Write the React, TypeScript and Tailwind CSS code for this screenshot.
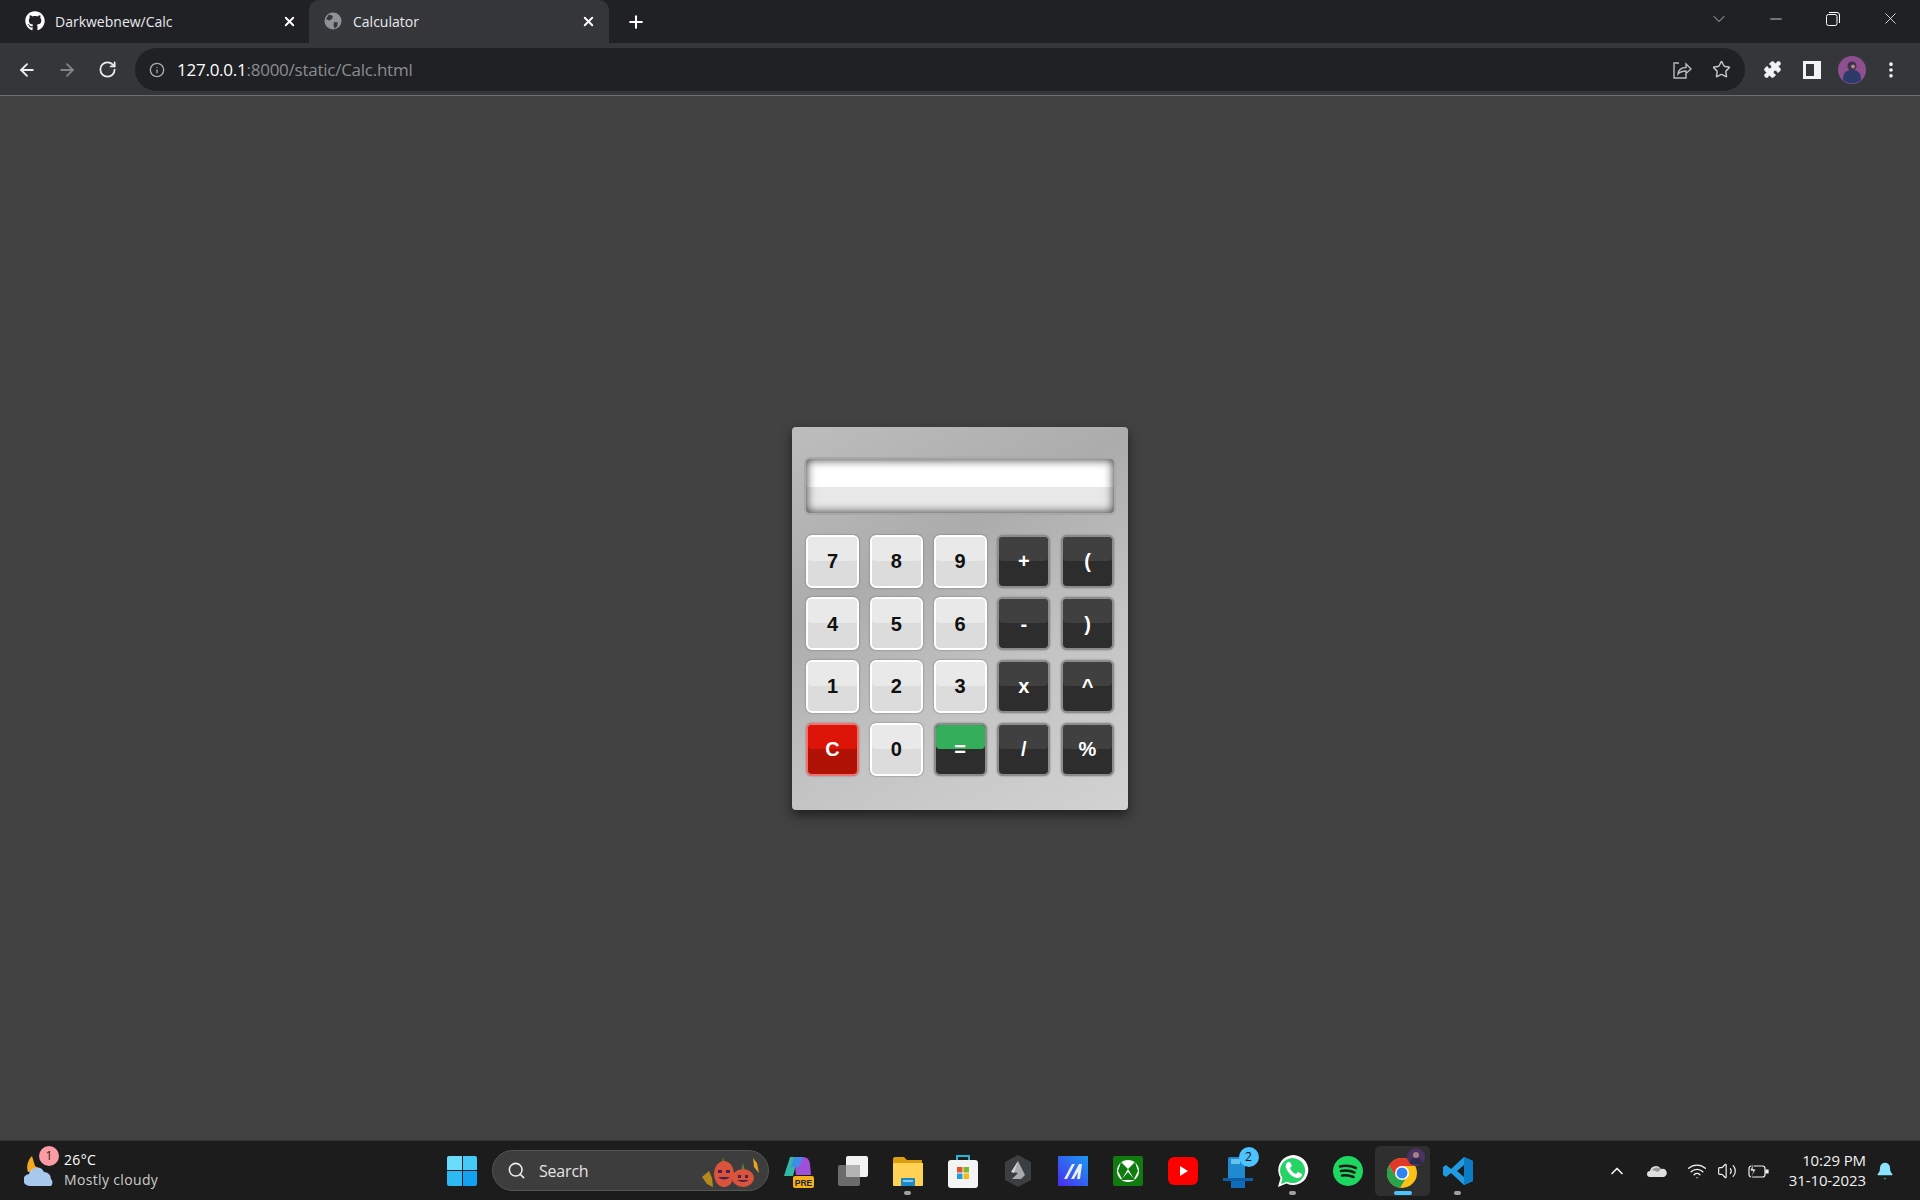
import { FaGithub } from "react-icons/fa";
import { ArrowLeft, ArrowRight, RotateCw, Info, Star, Puzzle, X, Plus, ChevronDown, Minus, EllipsisVertical, Search, ChevronUp, Wifi, Volume2, Bell } from "lucide-react";

const keys = [
  ["7", "light"], ["8", "light"], ["9", "light"], ["+", "dark"], ["(", "dark"],
  ["4", "light"], ["5", "light"], ["6", "light"], ["-", "dark"], [")", "dark"],
  ["1", "light"], ["2", "light"], ["3", "light"], ["x", "dark"], ["^", "dark"],
  ["C", "red"], ["0", "light"], ["=", "green"], ["/", "dark"], ["%", "dark"],
];

function Key({ label, kind }: { label: string; kind: string }) {
  const shell =
    kind === "light"
      ? "border-2 border-white bg-[#dcdcdc] text-[#111] shadow-[0_0_2px_#666666]"
      : kind === "red"
        ? "border-2 border-[#f27070] bg-[#b01206] text-white shadow-[0_0_2px_#777777]"
        : "border-2 border-[#8c8c8c] bg-[#2d2d2d] text-white shadow-[0_0_2px_#777777]";
  const top =
    kind === "light"
      ? "bg-[#e9e9e9]"
      : kind === "red"
        ? "bg-[#dd1508]"
        : kind === "green"
          ? "bg-[#34ae5a]"
          : "bg-[#404040]";
  return (
    <div className={`relative flex h-[53px] w-[53px] items-center justify-center overflow-hidden rounded-[6px] font-['Liberation_Sans',sans-serif] text-[20px] font-bold ${shell}`}>
      <div className={`absolute inset-x-0 top-0 h-[24px] rounded-b-[4px] ${top}`}></div>
      <span className="relative">{label}</span>
    </div>
  );
}

function Calculator() {
  return (
    <div className="flex h-[383px] w-[336px] flex-col rounded-[4px] bg-[linear-gradient(150deg,#bdbdbd_0%,#acacac_35%,#c4c4c4_65%,#d2d2d2_100%)] px-[14px] pt-[32px] shadow-[0_5px_12px_rgba(0,0,0,0.55)]">
      <div className="h-[54px] w-full rounded-[4px] bg-[linear-gradient(#ffffff_52%,#e8e8e8_52%)] shadow-[inset_0_0_10px_1px_#444,0_0_1px_2px_#a8a8a8]"></div>
      <div className="mt-[22px] grid grid-cols-[repeat(5,53px)] justify-between gap-y-[9.7px]">
        {keys.map(([label, kind]) => (
          <Key key={label} label={label} kind={kind} />
        ))}
      </div>
    </div>
  );
}

function Globe() {
  return (
    <svg width="18" height="18" viewBox="0 0 18 18">
      <circle cx="9" cy="9" r="8.5" fill="#8e9297" />
      <path d="M5 2.5 9 4l-1 3-3 1.5L2 7zM10 10l4 .5-1 4-2.5 2-1-3z" fill="#35363a" />
    </svg>
  );
}

function Tab({ active, icon, title }: { active?: boolean; icon: React.ReactNode; title: string }) {
  return (
    <div className={`flex h-[43px] items-center pb-[1px] ${active ? "w-[300px] rounded-t-[10px] bg-[#35363a] pl-[15px] pr-[13px]" : "w-[309px] pl-[25px] pr-[12px]"}`}>
      {icon}
      <span className={`font-['Open_Sans',sans-serif] text-[14px] tracking-[0px] text-[#e8eaed] ${active ? "ml-[11px]" : "ml-[10px]"}`}>{title}</span>
      <X className="ml-auto text-white" size={15} strokeWidth={3} />
    </div>
  );
}

function TabStrip() {
  return (
    <div className="flex h-[43px] items-center bg-[#202124] text-white">
      <Tab icon={<FaGithub size={20} className="text-white" />} title="Darkwebnew/Calc" />
      <Tab active icon={<Globe />} title="Calculator" />
      <Plus className="ml-[17px]" size={20} strokeWidth={2.5} />
      <div className="mb-[6px] ml-auto flex items-center">
        <ChevronDown size={20} strokeWidth={1} className="mr-[38px] text-[#d8d8d8]" />
        <Minus size={18} strokeWidth={1} className="mr-[41px]" />
        <svg width="14" height="14" viewBox="0 0 14 14" fill="none" stroke="white" className="mr-[41px]">
          <rect x="0.5" y="2.5" width="10.5" height="11" rx="2" />
          <path d="M3 .5h8a2.5 2.5 0 0 1 2.5 2.5v8" />
        </svg>
        <X size={19} strokeWidth={1} className="mr-[20px]" />
      </div>
    </div>
  );
}

function Toolbar() {
  return (
    <div className="flex h-[53px] items-start border-b border-[#6e6e6e] bg-[#35363a] pt-[5px] text-white">
      <div className="flex h-[43px] w-[135px] items-center pl-[17px]">
        <ArrowLeft size={20} strokeWidth={2.2} className="text-[#eeeeee]" />
        <ArrowRight size={20} strokeWidth={2.2} className="ml-[20px] text-[#808387]" />
        <RotateCw size={19} strokeWidth={2.2} className="ml-[21px] text-[#eeeeee]" />
      </div>
      <div className="flex h-[43px] w-[1610px] items-center rounded-full bg-[#202124] pl-[14px] pr-[14px]">
        <Info size={16} className="text-[#a8abaf]" />
        <span className="ml-[12px] font-['Open_Sans',sans-serif] text-[17px] tracking-[-0.25px] text-white">
          127.0.0.1<span className="text-[#8a8d91]">:8000/static/Calc.html</span>
        </span>
        <svg width="20" height="20" viewBox="0 0 20 20" fill="none" stroke="#b8babd" strokeWidth="1.4" className="ml-auto mr-[20px]">
          <path d="M7 3H2v15h12v-4" />
          <path d="M6 14c.5-4 3.5-6.500 8-6.500V4l5 5-5 4.500V11c-3.500 0-6 1-8 3z" />
        </svg>
        <Star size={19} strokeWidth={1.8} className="text-[#c4c6c9]" />
      </div>
      <div className="flex h-[43px] flex-1 items-center">
        <Puzzle size={19} fill="#f1f3f4" strokeWidth={1} className="ml-[18px] text-[#f1f3f4]" />
        <svg width="18" height="18" viewBox="0 0 18 18" className="ml-[21px]">
          <path d="M0 0h18v18H0zM3 3v12h8V3z" fill="#f1f3f4" fillRule="evenodd" />
        </svg>
        <svg width="28" height="28" viewBox="0 0 28 28" className="ml-[17px]">
          <circle cx="14" cy="14" r="14" fill="#8d4f8d" />
          <circle cx="14" cy="10" r="4.500" fill="#40324e" />
          <path d="M5 24c0-8 4-10 9-10s9 2 9 10a14 14 0 0 1-18 0z" fill="#2b3a68" />
          <circle cx="15" cy="10.500" r="2" fill="#b08a86" />
        </svg>
        <EllipsisVertical size={20} strokeWidth={2.4} className="ml-[15px] text-[#f1f3f4]" />
      </div>
    </div>
  );
}

function Weather() {
  return (
    <div className="flex w-[200px] items-center pl-[24px]">
      <div className="relative h-[36px] w-[33px]">
        <svg width="32" height="36" viewBox="0 0 32 36" className="absolute left-0 top-0">
          <path d="M8 3 11 13 18 17 4 19C2 13 4 7 8 3z" fill="#f4a91f" />
          <path d="M6 33a6 6 0 0 1-1-12 8 8 0 0 1 15-2 7 7 0 0 1 7 7 5 5 0 0 1 0 7z" fill="#a9c8ee" />
        </svg>
        <div className="absolute left-[15px] top-[-7px] flex h-[20px] w-[20px] items-center justify-center rounded-full bg-[#fb9ca4] font-['Open_Sans',sans-serif] text-[12px] text-[#222]">1</div>
      </div>
      <div className="mb-[2px] ml-[7px] font-['Open_Sans',sans-serif] text-[14px] leading-[20px] tracking-[0.35px]">
        <div className="text-white">26°C</div>
        <div className="text-[#cccccc]">Mostly cloudy</div>
      </div>
    </div>
  );
}

function Pumpkins() {
  return (
    <svg width="64" height="34" viewBox="0 0 64 34" className="ml-auto mr-[5px]">
      <path d="M3 23 10 17 13 24 14 33 8 30z" fill="#b58a1d" />
      <path d="M24 3l1.500 6h-3zM44 9l1.500 6h-3z" fill="#4e8a2c" />
      <ellipse cx="25" cy="20" rx="10" ry="13" fill="#d9543a" />
      <ellipse cx="44" cy="24" rx="11" ry="9" fill="#d9543a" />
      <path d="M19 16h4v3h-4zM27 16h4v3h-4zM19 23q6 5 12 0zM39 21h3v3h-3zM46 21h3v3h-3zM38 26q6 4 12 0z" fill="#4a1f52" />
      <path d="M54 4l4 5 2 10-5-6z" fill="#e8a21f" />
    </svg>
  );
}

function WinIcon() {
  return (
    <div className="grid h-[30px] w-[30px] grid-cols-2 gap-[1px]">
      <div className="rounded-tl-[2px] bg-[#6cdcfb]"></div>
      <div className="rounded-tr-[2px] bg-[#45c9f7]"></div>
      <div className="rounded-bl-[2px] bg-[#2eb8f4]"></div>
      <div className="rounded-br-[2px] bg-[#12a2ef]"></div>
    </div>
  );
}

function SearchBox() {
  return (
    <div className="ml-[15px] flex h-[41px] w-[277px] items-center rounded-full border border-[#555] bg-[#3d3d3d] pl-[14px]">
      <Search size={19} className="text-[#eeeeee]" />
      <span className="ml-[13px] font-['Open_Sans',sans-serif] text-[16px] tracking-[-0.2px] text-[#e4e4e4]">Search</span>
      <Pumpkins />
    </div>
  );
}

function Slot({ children, mark, active }: { children: React.ReactNode; mark?: boolean; active?: boolean }) {
  return (
    <div className={`relative flex h-[50px] w-[55px] items-center justify-center rounded-[5px] ${active ? "bg-[#2f2f2f]" : ""}`}>
      {children}
      {mark && (
        <div className={`absolute bottom-[1px] h-[4px] rounded-full ${active ? "w-[18px] bg-[#4cc2ff]" : "w-[7px] bg-[#a0a0a0]"}`}></div>
      )}
    </div>
  );
}

function AppIcons() {
  return (
    <div className="ml-[1px] flex items-center">
      <Slot>
        <svg width="32" height="34" viewBox="0 0 32 34">
          <path d="M8 3h8l-5 19H2z" fill="#34b8a6" />
          <path d="M12 3h9q6 0 7 7l1 11H14z" fill="#a04fd8" />
          <path d="M12 3h9l-4 10h-8z" fill="#3f8de8" />
          <rect x="11" y="22" width="21" height="12" rx="2" fill="#f6b21a" />
          <text x="21.500" y="31.500" textAnchor="middle" fontFamily="Liberation Sans" fontSize="8.500" fontWeight="700" fill="#222">PRE</text>
        </svg>
      </Slot>
      <Slot>
        <svg width="32" height="32" viewBox="0 0 32 32">
          <rect x="1" y="10" width="22" height="21" rx="2" fill="#6b6b6b" />
          <rect x="9" y="1" width="22" height="21" rx="2" fill="#f2f2f2" />
          <rect x="9" y="10" width="14" height="12" fill="#b4b4b4" />
        </svg>
      </Slot>
      <Slot mark>
        <svg width="32" height="32" viewBox="0 0 32 32">
          <path d="M1 4a2 2 0 0 1 2-2h9l3 3h15v6H1z" fill="#dc9d10" />
          <path d="M1 8h30v22a1 1 0 0 1-1 1H2a1 1 0 0 1-1-1z" fill="#fdd255" />
          <rect x="9" y="23" width="14" height="8" rx="1" fill="#1f86c9" />
          <rect x="11" y="25" width="10" height="2" fill="#7fcdf2" />
        </svg>
      </Slot>
      <Slot>
        <svg width="30" height="34" viewBox="0 0 30 34">
          <path d="M9 6V2h12v4" fill="none" stroke="#23b5d8" strokeWidth="2" />
          <rect x="0" y="6" width="30" height="28" rx="3" fill="#f4f4f4" />
          <rect x="9" y="13" width="5.500" height="5.500" fill="#e8512c" />
          <rect x="15.500" y="13" width="5.500" height="5.500" fill="#7ab92c" />
          <rect x="9" y="19.500" width="5.500" height="5.500" fill="#1e9ee0" />
          <rect x="15.500" y="19.500" width="5.500" height="5.500" fill="#f6b81a" />
        </svg>
      </Slot>
      <Slot>
        <svg width="28" height="32" viewBox="0 0 28 32">
          <path d="M14 0 27 7v18l-13 7-13-7V7z" fill="#3c3f42" />
          <path d="M14 6 21 20l-4 4H8l6-6-6-1z" fill="#a9acaf" />
          <path d="M14 6 7 17l3 1z" fill="#d4d6d8" />
        </svg>
      </Slot>
      <Slot>
        <svg width="30" height="30" viewBox="0 0 30 30">
          <defs>
            <linearGradient id="mvGrad" x1="0" y1="1" x2="1" y2="0">
              <stop offset="0" stopColor="#4a2cf0" />
              <stop offset="1" stopColor="#1a9bf2" />
            </linearGradient>
          </defs>
          <rect width="30" height="30" fill="url(#mvGrad)" />
          <path d="M6 23 14 8h3L9 23zM13 23 21 8h3l-2 15h-3l1-7-4 7z" fill="#e8edff" />
        </svg>
      </Slot>
      <Slot>
        <svg width="30" height="30" viewBox="0 0 30 30">
          <rect width="30" height="30" rx="2" fill="#107c10" />
          <circle cx="15" cy="15" r="11" fill="#fff" />
          <path d="M15 13 8 6l-3 9 4 8zM15 13l7-7 3 9-4 8zM15 16l-7 8h14z" fill="#107c10" />
        </svg>
      </Slot>
      <Slot>
        <svg width="30" height="30" viewBox="0 0 30 30">
          <rect y="1" width="30" height="28" rx="6" fill="#fe0000" />
          <path d="M12 10v10l8-5z" fill="#fff" />
        </svg>
      </Slot>
      <Slot>
        <div className="relative h-[34px] w-[30px]">
          <svg width="30" height="34" viewBox="0 0 30 34">
            <rect x="5" y="3" width="17" height="24" rx="2" fill="#1f8ad2" />
            <rect x="8" y="5" width="9" height="5" fill="#62c4ee" />
            <rect x="0" y="24" width="30" height="3" fill="#0c5ea8" />
            <rect x="8" y="27" width="14" height="7" fill="#0f6cbd" />
          </svg>
          <div className="absolute left-[16px] top-[-7px] flex h-[20px] w-[20px] items-center justify-center rounded-full bg-[#4cc2ff] font-['Open_Sans',sans-serif] text-[12px] text-[#111]">2</div>
        </div>
      </Slot>
      <Slot mark>
        <svg width="32" height="34" viewBox="0 0 32 34">
          <path d="M1 33 3.500 24A15 15 0 1 1 9.500 29.500z" fill="#fff" />
          <path d="M4 30 5.500 24A12.500 12.500 0 1 1 10 27.800z" fill="#25d366" />
          <path d="M11 8c-2 1-3 3-2 6 2 5 6 9 11 10 3 0 5-1 5-4l-4-2-2 2c-3-1-5-3-6-6l2-2-2-4z" fill="#fff" />
        </svg>
      </Slot>
      <Slot>
        <svg width="30" height="30" viewBox="0 0 30 30">
          <circle cx="15" cy="15" r="15" fill="#1ed760" />
          <path d="M7 10.500q8-2 16 1.500M8 15q7-1.500 13.500 1.500M9 19.500q6-1 11.500 1.500" fill="none" stroke="#1a1a1a" strokeWidth="2.500" strokeLinecap="round" />
        </svg>
      </Slot>
      <Slot mark active>
        <div className="relative h-[34px] w-[32px]">
          <svg width="32" height="32" viewBox="0 0 32 32" className="absolute bottom-0 left-0">
            <circle cx="15" cy="17" r="15" fill="#fbc116" />
            <path d="M15 2A15 15 0 0 0 2 9.500L9 21l6-11h13A15 15 0 0 0 15 2z" fill="#e0392b" />
            <path d="M2 9.500A15 15 0 0 0 13 32l6-10-10-1z" fill="#2ba24c" />
            <circle cx="15" cy="17" r="7" fill="#fff" />
            <circle cx="15" cy="17" r="5.500" fill="#2f84f2" />
          </svg>
          <svg width="18" height="18" viewBox="0 0 18 18" className="absolute right-[-6px] top-[-6px]">
            <circle cx="9" cy="9" r="9" fill="#4b3360" />
            <circle cx="9" cy="7" r="3" fill="#a48088" />
            <path d="M3 16c0-5 3-6 6-6s6 1 6 6z" fill="#2e2a4e" />
          </svg>
        </div>
      </Slot>
      <Slot mark>
        <svg width="30" height="30" viewBox="0 0 30 30">
          <path d="M21 1 30 5v20l-9 4L8 17l-5 4-3-2v-8l3-2 5 4z" fill="#1f9be3" />
          <path d="M21 1 30 5v20l-9 4z" fill="#0d7cc6" />
          <path d="M21 9v12l-7-6z" fill="#1a1a1a" />
        </svg>
      </Slot>
    </div>
  );
}

function Tray() {
  return (
    <div className="ml-auto flex items-center text-[#f2f2f2]">
      <ChevronUp size={20} strokeWidth={2} className="" />
      <svg width="20" height="13" viewBox="0 0 20 13" className="ml-[20px]">
        <path d="M3 13a3 3 0 0 1 0-6 6 6 0 0 1 11-2 4 4 0 0 1 3 8z" fill="#e0e0e0" />
        <path d="M5 6a6 6 0 0 1 9-1l-3 3z" fill="#9a9a9a" />
      </svg>
      <Wifi size={20} strokeWidth={1.6} className="ml-[20px]" />
      <Volume2 size={20} strokeWidth={1.4} className="ml-[10px]" />
      <svg width="22" height="18" viewBox="0 0 22 18" fill="none" stroke="#f2f2f2" strokeWidth="1.2" className="ml-[10px]">
        <rect x="2" y="4" width="16" height="11" rx="2.500" />
        <path d="M19 8h2v3h-2z" fill="#f2f2f2" />
        <path d="M6 1 3 9h3l-2 7 5-9H6z" fill="#f2f2f2" stroke="#1c1c1c" strokeWidth="0.800" />
      </svg>
      <div className="mb-[2px] ml-[20px] text-right font-['Open_Sans',sans-serif] text-[15px] leading-[20px] tracking-[-0.1px]">
        <div>10:29 PM</div>
        <div>31-10-2023</div>
      </div>
      <Bell size={20} fill="#8ae4fb" strokeWidth={0} className="ml-[9px] mr-[25px]" />
    </div>
  );
}

export default function App() {
  return (
    <div className="flex h-[1200px] w-[1920px] flex-col overflow-hidden bg-[#424242]">
      <TabStrip />
      <Toolbar />
      <div className="flex flex-1 items-center justify-center">
        <Calculator />
      </div>
      <div className="flex h-[60px] items-center border-t border-[#333] bg-[#1c1c1c]">
        <Weather />
        <div className="ml-[247px] flex items-center">
          <WinIcon />
          <SearchBox />
          <AppIcons />
        </div>
        <Tray />
      </div>
    </div>
  );
}
